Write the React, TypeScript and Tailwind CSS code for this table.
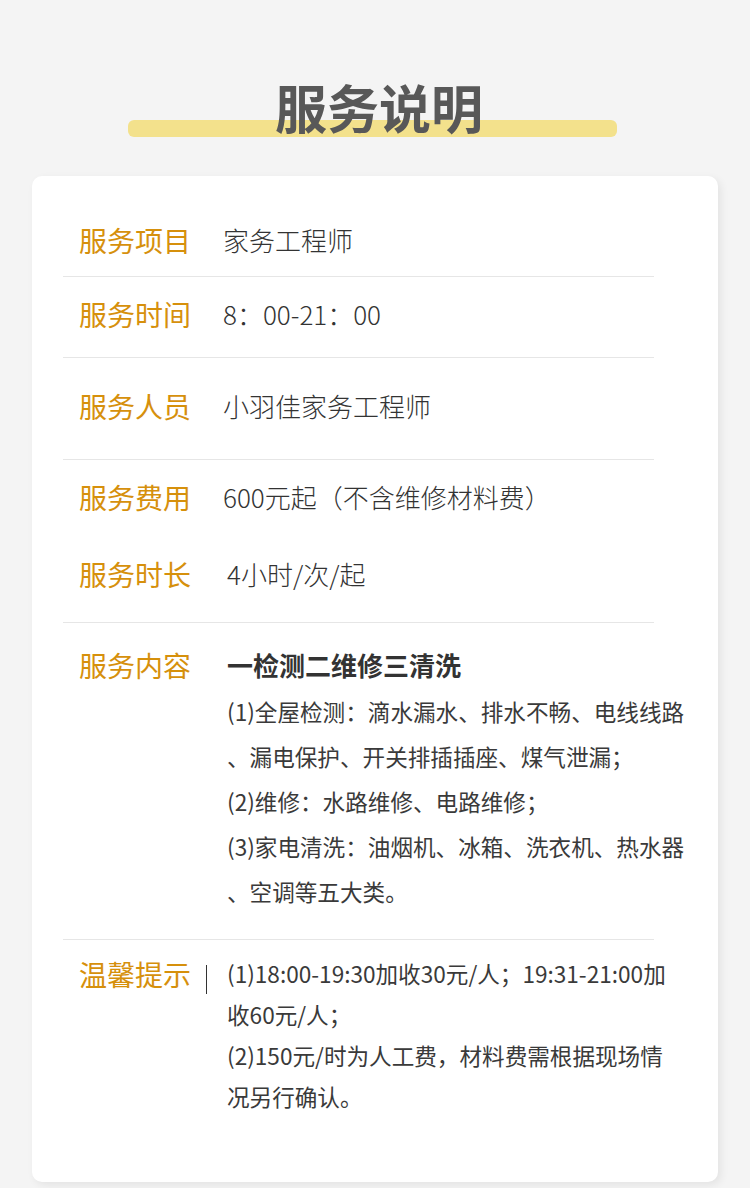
import React from 'react';

const FONT = "font-['Noto_Sans_CJK_SC','Noto_Sans',sans-serif]";

const contentLines = [
  '(1)全屋检测：滴水漏水、排水不畅、电线线路',
  '、漏电保护、开关排插插座、煤气泄漏；',
  '(2)维修：水路维修、电路维修；',
  '(3)家电清洗：油烟机、冰箱、洗衣机、热水器',
  '、空调等五大类。',
];

const tipLines = [
  '(1)18:00-19:30加收30元/人；19:31-21:00加',
  '收60元/人；',
  '(2)150元/时为人工费，材料费需根据现场情',
  '况另行确认。',
];

function Label({ children }: { children: React.ReactNode }) {
  return (
    <div className="w-[160px] shrink-0 pl-[16px] text-[28px] leading-[40px] text-[#d6900c] whitespace-nowrap">
      {children}
    </div>
  );
}

function Value({ children, className = '' }: { children: React.ReactNode; className?: string }) {
  return (
    <div className={`text-[26px] leading-[40px] font-light text-[#333] whitespace-nowrap ${className}`}>
      {children}
    </div>
  );
}

function Divider() {
  return <div className="h-px w-[591px] bg-[#e6e6e6]" />;
}

export default function App() {
  return (
    <main className={`min-h-[1188px] w-[750px] bg-[#f4f4f4] ${FONT}`}>
      {/* title */}
      <div className="pt-[77px]">
        <h1 className="text-center text-[52px] leading-[60px] font-semibold text-[#585858] pl-[8px] relative z-10">
          服务说明
        </h1>
        <div className="ml-[128px] mt-[-17px] h-[17px] w-[489px] rounded-[6px] bg-[#f3e18c]" />
      </div>

      {/* card */}
      <div className="ml-[32px] mt-[39px] w-[686px] h-[1006px] rounded-[10px] bg-white pl-[31px] shadow-[3px_3px_8px_rgba(0,0,0,0.07)]">
        <div className="flex pt-[44px] pb-[16px]">
          <Label>服务项目</Label>
          <Value>家务工程师</Value>
        </div>
        <Divider />

        <div className="flex pt-[17px] pb-[23px]">
          <Label>服务时间</Label>
          <Value>8：00-21：00</Value>
        </div>
        <Divider />

        <div className="flex pt-[28px] pb-[33px]">
          <Label>服务人员</Label>
          <Value>小羽佳家务工程师</Value>
        </div>
        <Divider />

        <div className="flex pt-[17px]">
          <Label>服务费用</Label>
          <Value>600元起（不含维修材料费）</Value>
        </div>
        <div className="flex pt-[37px] pb-[28px]">
          <Label>服务时长</Label>
          <Value className="ml-[4px]">4小时/次/起</Value>
        </div>
        <Divider />

        <div className="flex pt-[22px] pb-[25px]">
          <Label>服务内容</Label>
          <div className="ml-[4px]">
            <div className="text-[26px] leading-[40px] font-bold text-[#333] whitespace-nowrap">一检测二维修三清洗</div>
            <div className="mt-[4px] text-[22.6px] leading-[45px] text-[#3a3a3a]">
              {contentLines.map((line) => (
                <div key={line} className="whitespace-nowrap">{line}</div>
              ))}
            </div>
          </div>
        </div>
        <Divider />

        <div className="flex pt-[14px]">
          <div className="w-[160px] shrink-0 pl-[16px] flex items-start">
            <span className="text-[28px] leading-[40px] text-[#d6900c] whitespace-nowrap">温馨提示</span>
            <span className="ml-[15px] mt-[11px] h-[29px] w-px bg-[#333]" />
          </div>
          <div className="ml-[4px] -mt-[1px] text-[22.6px] leading-[41px] text-[#3a3a3a]">
            {tipLines.map((line) => (
              <div key={line} className="whitespace-nowrap">{line}</div>
            ))}
          </div>
        </div>
      </div>
      <div className="h-[6px]" />
    </main>
  );
}
